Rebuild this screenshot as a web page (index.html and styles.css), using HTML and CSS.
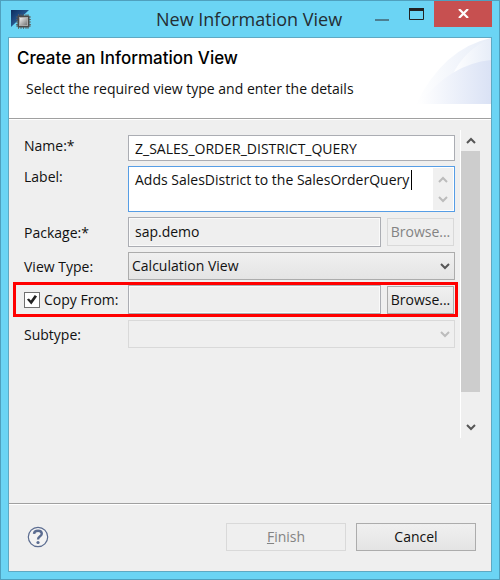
FILE: index.html
```html
<!DOCTYPE html>
<html lang="en">
<head>
<meta charset="utf-8">
<title>New Information View</title>
<link rel="stylesheet" href="styles.css">
</head>
<body>
<div class="window">
  <header class="titlebar">
    <svg class="app-icon" viewBox="0 0 20 20" aria-hidden="true">
      <defs>
        <linearGradient id="sail" x1="0" y1="0" x2="1" y2="1"><stop offset="0" stop-color="#0c2c5c"/><stop offset="1" stop-color="#3f80c0"/></linearGradient>
        <linearGradient id="chip" x1="0" y1="0" x2="1" y2="1"><stop offset="0" stop-color="#eee"/><stop offset="1" stop-color="#777"/></linearGradient>
      </defs>
      <path d="M0 1H18L0 18Z" fill="url(#sail)"/>
      <path d="M7.500 5V20M10 5V20M12.500 5V20M15 5V20M17 5V20M5 8H20M5 10.500H20M5 13H20M5 15.500H20M5 17H20" stroke="#5d5a58" stroke-width=".8"/>
      <rect x="6.500" y="6.500" width="12" height="12" rx="1" fill="#4d4a49"/>
      <rect x="8" y="8" width="9" height="9" fill="#aaa"/>
      <rect x="9" y="9" width="7" height="7" fill="url(#chip)"/>
    </svg>
    <h1 class="title">New Information View</h1>
    <div class="caption-buttons">
      <button class="caption" aria-label="Minimize"><svg width="14" height="20" viewBox="0 0 14 20"><path d="M0 15H14" stroke="#4c7f92" stroke-width="2"/></svg></button>
      <button class="caption caption-max" aria-label="Maximize"><svg width="15" height="13" viewBox="0 0 15 13"><path d="M.5 .5H14.500V11.500H.5Z" fill="none" stroke="#222"/><path d="M0 0H15V3H0Z" fill="#222"/></svg></button>
      <button class="caption caption-close" aria-label="Close"><svg width="11" height="9" viewBox="0 0 11 9"><path d="M1 0L10 9M10 0L1 9" stroke="#fff" stroke-width="2.200"/></svg></button>
    </div>
  </header>
  <main class="dialog">
    <section class="banner">
      <h2 class="heading">Create an Information View</h2>
      <p class="hint">Select the required view type and enter the details</p>
      <svg class="banner-art" viewBox="0 0 75 66" aria-hidden="true">
        <defs>
          <linearGradient id="fade"><stop offset="0" stop-color="#fff"/><stop offset="1" stop-color="#e7edf8"/></linearGradient>
          <linearGradient id="fade2"><stop offset="0" stop-color="#fff"/><stop offset="1" stop-color="#dae2f5"/></linearGradient>
        </defs>
        <path d="M0 66Q28 10 75 0V66Z" fill="url(#fade)"/>
        <path d="M36 38Q48 12 75 0V66H36Z" fill="url(#fade)"/>
        <path d="M3 66Q34 26 75 22V66Z" fill="url(#fade2)"/>
      </svg>
    </section>
    <form class="body">
      <div class="fields">
        <div class="row row-name">
          <label class="label" for="name">Name:*</label>
          <input class="text" id="name" type="text" value="Z_SALES_ORDER_DISTRICT_QUERY">
        </div>
        <div class="row row-label">
          <label class="label" for="label">Label:</label>
          <div class="area">
            <textarea id="label" rows="2">Adds SalesDistrict to the SalesOrderQuery</textarea>
            <span class="caret"></span>
            <span class="spinner">
              <svg width="10" height="7" viewBox="0 0 10 7"><path d="M1 6L5 2L9 6"/></svg>
              <svg width="10" height="7" viewBox="0 0 10 7"><path d="M1 1L5 5L9 1"/></svg>
            </span>
          </div>
        </div>
        <div class="row row-package">
          <label class="label" for="package">Package:*</label>
          <input class="text readonly" id="package" type="text" value="sap.demo" readonly>
          <button class="button browse" type="button" disabled>Browse...</button>
        </div>
        <div class="row row-type">
          <label class="label" for="type">View Type:</label>
          <div class="select">
            <select id="type"><option>Calculation View</option></select>
            <svg width="10" height="7" viewBox="0 0 10 7"><path d="M1 1L5 5L9 1"/></svg>
          </div>
        </div>
        <div class="row row-copy">
          <label class="label check" for="copy"><input id="copy" type="checkbox" checked>Copy From:</label>
          <input class="text readonly" type="text" aria-label="Copy from" readonly>
          <button class="button browse" type="button">Browse...</button>
        </div>
        <div class="row row-subtype">
          <label class="label" for="subtype">Subtype:</label>
          <div class="select disabled">
            <select id="subtype" disabled><option></option></select>
            <svg width="10" height="7" viewBox="0 0 10 7"><path d="M1 1L5 5L9 1"/></svg>
          </div>
        </div>
      </div>
      <div class="scrollbar" aria-hidden="true">
        <svg width="10" height="7" viewBox="0 0 10 7"><path d="M1 6L5 2L9 6"/></svg>
        <span class="thumb"></span>
        <svg width="10" height="7" viewBox="0 0 10 7"><path d="M1 1L5 5L9 1"/></svg>
      </div>
    </form>
    <footer class="footer">
      <button class="help" type="button" aria-label="Help">
        <svg width="22" height="22" viewBox="0 0 22 22"><circle cx="11" cy="11" r="9.700" fill="#f3f3f3" stroke="#5b6c90" stroke-width="1.200"/><path d="M7 7.800C7.400 3.700 14.800 3.700 14.800 7.800C14.800 10.300 11 10.200 11 13.400" fill="none" stroke="#5b6c90" stroke-width="2.400"/><circle cx="11" cy="16.500" r="1.600" fill="#5b6c90"/></svg>
      </button>
      <button class="button action" type="button" disabled><u>F</u>inish</button>
      <button class="button action" type="button">Cancel</button>
    </footer>
  </main>
</div>
</body>
</html>
```
FILE: styles.css
```css
* { box-sizing: border-box; }

body {
  margin: 0;
  font-family: "Open Sans", "Noto Sans", sans-serif;
  font-size: 14px;
  line-height: 20px;
  color: #111;
}

input, textarea, select, button {
  margin: 0;
  font: inherit;
  color: inherit;
}

svg { display: block; flex: none; }

.window {
  display: flex;
  flex-direction: column;
  min-height: 100vh;
  padding: 0 7px 7px;
  border: 1px solid #4fa0be;
  background: #6bd4f4;
}

.titlebar {
  display: grid;
  grid-template-columns: 148px 1fr 148px;
  height: 36px;
}

.app-icon { width: 20px; height: 20px; margin: 8px 0 0 3px; }

.title {
  margin: 0;
  font-size: 18px;
  font-weight: 400;
  line-height: 37px;
  white-space: nowrap;
  color: #242e33;
}

.caption-buttons {
  display: flex;
  justify-content: flex-end;
  align-items: flex-start;
}

.caption {
  display: flex;
  justify-content: center;
  width: 34px;
  height: 26px;
  padding: 4px 0 0;
  border: 0;
  background: none;
}

.caption-max { width: 35px; padding-top: 7px; }
.caption-close { width: 58px; padding-top: 8px; background: #c75050; }

.dialog {
  display: flex;
  flex: 1;
  flex-direction: column;
  border: 1px solid #5fa9c3;
  background: #efefef;
}

.banner {
  position: relative;
  height: 81px;
  padding: 9px 8px;
  border-bottom: 1px solid #a0a0a0;
  background: #fff;
}

.heading {
  margin: 0;
  font-family: Inter, "Liberation Sans", sans-serif;
  font-size: 17px;
  font-weight: 500;
  line-height: 22px;
  color: #000;
}

.hint { margin: 10px 0 0 9px; }

.banner-art { position: absolute; top: 0; right: 0; width: 75px; height: 66px; }

.body {
  display: flex;
  flex: 1;
  gap: 5px;
  padding: 10px 11px 0 15px;
  border-top: 1px solid #fff;
}

.fields { flex: 1; padding-top: 5px; }

.row {
  display: grid;
  grid-template-columns: 104px 1fr auto;
  align-items: start;
}

.label { padding-top: 1px; }

.text {
  width: 100%;
  min-width: 0;
  height: 26px;
  padding: 0 6px;
  border: 1px solid #abadb3;
  outline: 0;
  background: #fff;
}

.readonly {
  height: 30px;
  padding-bottom: 2px;
  background: #efefef;
  box-shadow: inset 0 0 0 1px #fafafa;
}

.row-label { margin-top: 5px; }

.area {
  position: relative;
  height: 46px;
  border: 1px solid #569de5;
  background: #fff;
}

.area textarea {
  display: block;
  width: 100%;
  height: 44px;
  padding: 3px 22px 0 6px;
  border: 0;
  outline: 0;
  resize: none;
  overflow: hidden;
  background: none;
}

.caret { position: absolute; top: 3px; right: 42px; width: 1px; height: 20px; background: #000; }

.spinner {
  position: absolute;
  top: 1px;
  right: 1px;
  bottom: 1px;
  display: flex;
  flex-direction: column;
  justify-content: space-between;
  align-items: center;
  width: 20px;
  padding: 8px 0 7px;
  background: #f0f0f0;
}

.spinner path, .select path, .scrollbar path { fill: none; stroke: #565656; stroke-width: 2; }
.spinner path, .select.disabled path { stroke: #bcbcbc; }

.row-package { margin-top: 5px; }
.row-package .label { padding-top: 6px; }

.button {
  padding: 0;
  border: 1px solid #acacac;
  background: linear-gradient(#f0f0f0, #e4e4e4);
}

.button:disabled {
  border-color: #d9d9d9;
  background: #efefef;
  color: #838383;
}

.browse { width: 67px; height: 28px; margin: 1px 1px 0 6px; }

.row-type { margin-top: 5px; }
.row-type .label, .row-subtype .label { padding-top: 5px; }

.select { position: relative; }

.select select {
  display: block;
  width: 100%;
  height: 28px;
  padding: 0 24px 0 3px;
  border: 1px solid #acacac;
  border-radius: 0;
  appearance: none;
  background: linear-gradient(#f0f0f0, #e4e4e4);
}

.select.disabled select { border-color: #d9d9d9; background: #efefef; opacity: 1; }
.select svg { position: absolute; top: 11px; right: 5px; }

.row-copy {
  align-items: center;
  height: 35px;
  margin: 2px -3px 0 -11px;
  padding-left: 8px;
  border: 3px solid #f00;
}

.row-copy .text { height: 29px; }
.row-copy .browse { margin: 0 1px 0 6px; }

.check { display: flex; gap: 4px; align-items: center; padding: 0; white-space: nowrap; }

.check input {
  width: 16px;
  height: 16px;
  border: 1px solid #707070;
  appearance: none;
  background: #fff;
}

.check input:checked::before {
  content: "";
  display: block;
  width: 14px;
  height: 14px;
  background: #222;
  clip-path: polygon(14% 50%, 28% 42%, 42% 58%, 70% 18%, 86% 28%, 45% 85%);
}

.row-subtype { margin-top: 3px; }

.scrollbar {
  display: flex;
  flex-direction: column;
  align-items: center;
  width: 20px;
  height: 308px;
  padding: 7px 0;
  border-left: 1px solid #fff;
}

.thumb { flex: 1; width: 100%; margin: 7px 0 32px; background: #cdcdcd; }

.footer {
  display: flex;
  gap: 10px;
  align-items: center;
  height: 68px;
  padding: 0 15px 1px 18px;
  border-top: 1px solid #a0a0a0;
  box-shadow: inset 0 1px #fff;
}

.help { margin-right: auto; padding: 0; border: 0; background: none; }
.action { width: 120px; height: 28px; }
```
